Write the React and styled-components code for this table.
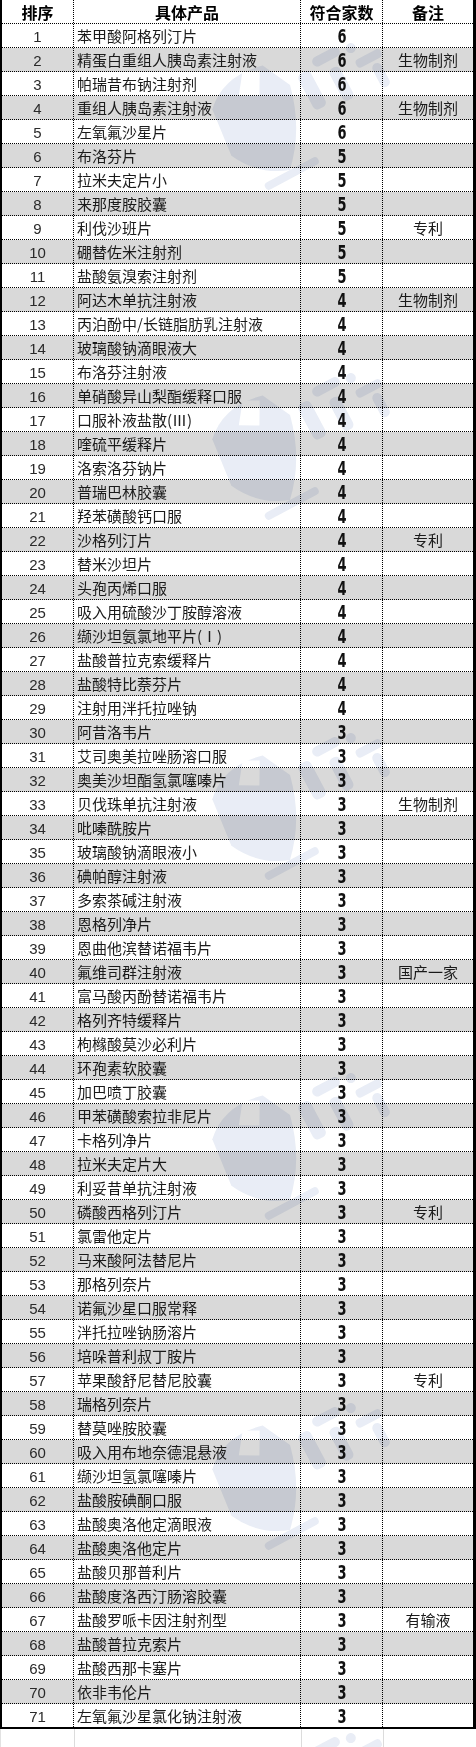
import React from 'react';
import styled, { createGlobalStyle } from 'styled-components';

const GlobalStyle = createGlobalStyle`
  html, body { margin: 0; padding: 0; background: #ffffff; }
  body { font-family: "Noto Sans CJK SC", "Noto Sans", sans-serif; }
`;

const data = [
  [1, '苯甲酸阿格列汀片', 6, ''],
  [2, '精蛋白重组人胰岛素注射液', 6, '生物制剂'],
  [3, '帕瑞昔布钠注射剂', 6, ''],
  [4, '重组人胰岛素注射液', 6, '生物制剂'],
  [5, '左氧氟沙星片', 6, ''],
  [6, '布洛芬片', 5, ''],
  [7, '拉米夫定片小', 5, ''],
  [8, '来那度胺胶囊', 5, ''],
  [9, '利伐沙班片', 5, '专利'],
  [10, '硼替佐米注射剂', 5, ''],
  [11, '盐酸氨溴索注射剂', 5, ''],
  [12, '阿达木单抗注射液', 4, '生物制剂'],
  [13, '丙泊酚中/长链脂肪乳注射液', 4, ''],
  [14, '玻璃酸钠滴眼液大', 4, ''],
  [15, '布洛芬注射液', 4, ''],
  [16, '单硝酸异山梨酯缓释口服', 4, ''],
  [17, '口服补液盐散(Ⅲ)', 4, ''],
  [18, '喹硫平缓释片', 4, ''],
  [19, '洛索洛芬钠片', 4, ''],
  [20, '普瑞巴林胶囊', 4, ''],
  [21, '羟苯磺酸钙口服', 4, ''],
  [22, '沙格列汀片', 4, '专利'],
  [23, '替米沙坦片', 4, ''],
  [24, '头孢丙烯口服', 4, ''],
  [25, '吸入用硫酸沙丁胺醇溶液', 4, ''],
  [26, '缬沙坦氨氯地平片(Ⅰ)', 4, ''],
  [27, '盐酸普拉克索缓释片', 4, ''],
  [28, '盐酸特比萘芬片', 4, ''],
  [29, '注射用泮托拉唑钠', 4, ''],
  [30, '阿昔洛韦片', 3, ''],
  [31, '艾司奥美拉唑肠溶口服', 3, ''],
  [32, '奥美沙坦酯氢氯噻嗪片', 3, ''],
  [33, '贝伐珠单抗注射液', 3, '生物制剂'],
  [34, '吡嗪酰胺片', 3, ''],
  [35, '玻璃酸钠滴眼液小', 3, ''],
  [36, '碘帕醇注射液', 3, ''],
  [37, '多索茶碱注射液', 3, ''],
  [38, '恩格列净片', 3, ''],
  [39, '恩曲他滨替诺福韦片', 3, ''],
  [40, '氟维司群注射液', 3, '国产一家'],
  [41, '富马酸丙酚替诺福韦片', 3, ''],
  [42, '格列齐特缓释片', 3, ''],
  [43, '枸橼酸莫沙必利片', 3, ''],
  [44, '环孢素软胶囊', 3, ''],
  [45, '加巴喷丁胶囊', 3, ''],
  [46, '甲苯磺酸索拉非尼片', 3, ''],
  [47, '卡格列净片', 3, ''],
  [48, '拉米夫定片大', 3, ''],
  [49, '利妥昔单抗注射液', 3, ''],
  [50, '磷酸西格列汀片', 3, '专利'],
  [51, '氯雷他定片', 3, ''],
  [52, '马来酸阿法替尼片', 3, ''],
  [53, '那格列奈片', 3, ''],
  [54, '诺氟沙星口服常释', 3, ''],
  [55, '泮托拉唑钠肠溶片', 3, ''],
  [56, '培哚普利叔丁胺片', 3, ''],
  [57, '苹果酸舒尼替尼胶囊', 3, '专利'],
  [58, '瑞格列奈片', 3, ''],
  [59, '替莫唑胺胶囊', 3, ''],
  [60, '吸入用布地奈德混悬液', 3, ''],
  [61, '缬沙坦氢氯噻嗪片', 3, ''],
  [62, '盐酸胺碘酮口服', 3, ''],
  [63, '盐酸奥洛他定滴眼液', 3, ''],
  [64, '盐酸奥洛他定片', 3, ''],
  [65, '盐酸贝那普利片', 3, ''],
  [66, '盐酸度洛西汀肠溶胶囊', 3, ''],
  [67, '盐酸罗哌卡因注射剂型', 3, '有输液'],
  [68, '盐酸普拉克索片', 3, ''],
  [69, '盐酸西那卡塞片', 3, ''],
  [70, '依非韦伦片', 3, ''],
  [71, '左氧氟沙星氯化钠注射液', 3, ''],
];

const COLS = '72px 227px 82px 90px';

const Page = styled.div`
  position: relative;
  width: 476px;
  height: 1747px;
  overflow: hidden;
  background: #ffffff;
`;

const Table = styled.div`
  display: flex;
  flex-direction: column;
  border-left: 2px solid #000;
  border-right: 3px solid #000;
  border-bottom: 2px solid #000;
`;

const Row = styled.div`
  display: grid;
  grid-template-columns: ${COLS};
  height: ${(p) => (p.$last ? '23px' : '24px')};
  box-sizing: border-box;
  border-bottom: ${(p) => (p.$last ? 'none' : '1px dotted #000')};
  background: ${(p) => (p.$alt ? '#d9d9d9' : '#ffffff')};
`;

const Cell = styled.div`
  display: flex;
  align-items: center;
  justify-content: ${(p) => (p.$left ? 'flex-start' : 'center')};
  padding-left: ${(p) => (p.$left ? '3px' : '0')};
  box-sizing: border-box;
  border-right: ${(p) => (p.$end ? 'none' : '1px dotted #000')};
  font-size: 15px;
  color: #1a1a1a;
  white-space: nowrap;
  overflow: hidden;
  line-height: 1;
`;

const HeadCell = styled(Cell)`
  font-weight: 700;
  font-size: 16px;
  color: #000;
`;

const Index = styled(Cell)`
  font-family: "Liberation Sans", Arial, sans-serif;
  font-size: 15px;
  color: #2a2a2a;
  padding-top: 1px;
`;

const Count = styled.span`
  display: inline-block;
  font-family: "DejaVu Sans Condensed", "DejaVu Sans", sans-serif;
  font-weight: 700;
  font-size: 19px;
  color: #111;
  transform: scale(0.76, 1);
  margin-top: 2px;
`;

const Tail = styled.div`
  display: grid;
  grid-template-columns: 74px 227px 82px 93px;
  height: 18px;
  border-left: 1px solid #e2e2e2;
`;

const TailCell = styled.div`
  border-right: ${(p) => (p.$end ? 'none' : '1px solid #dcdcdc')};
`;

const Overlay = styled.div`
  position: absolute;
  inset: 0;
  pointer-events: none;
  mix-blend-mode: multiply;
`;

const Mark = styled.svg`
  position: absolute;
  left: 190px;
  width: 250px;
  height: 200px;
  opacity: 0.12;
`;

function Watermark({ top }) {
  return (
    <Mark viewBox="0 0 250 200" style={{ top }}>
      <g fill="#4a6cb0" transform="rotate(-28 125 100)">
        <path d="M30 60 Q55 35 95 45 L110 75 Q100 120 70 150 Q40 140 25 110 Z" />
        <path d="M60 60 L75 40 L90 48 L78 70 Z" fill="#ffffff" />
        <rect x="120" y="70" width="14" height="40" rx="5" />
        <rect x="140" y="62" width="30" height="10" rx="5" />
        <rect x="150" y="80" width="12" height="36" rx="5" />
        <rect x="176" y="66" width="10" height="10" rx="5" />
        <rect x="178" y="84" width="28" height="9" rx="4" />
        <rect x="190" y="96" width="10" height="26" rx="5" />
        <rect x="40" y="150" width="60" height="8" rx="4" />
      </g>
    </Mark>
  );
}

export default function App() {
  return (
    <Page>
      <GlobalStyle />
      <Table>
        <Row>
          <HeadCell>排序</HeadCell>
          <HeadCell>具体产品</HeadCell>
          <HeadCell>符合家数</HeadCell>
          <HeadCell $end>备注</HeadCell>
        </Row>
        {data.map(([n, name, count, note], i) => (
          <Row key={n} $alt={n % 2 === 0} $last={i === data.length - 1}>
            <Index>{n}</Index>
            <Cell $left>{name}</Cell>
            <Cell>
              <Count>{count}</Count>
            </Cell>
            <Cell $end>{note}</Cell>
          </Row>
        ))}
      </Table>
      <Tail>
        <TailCell />
        <TailCell />
        <TailCell />
        <TailCell $end />
      </Tail>
      <Overlay>
        {[0, 330, 690, 1030, 1360, 1690].map((t) => (
          <Watermark key={t} top={t} />
        ))}
      </Overlay>
    </Page>
  );
}
